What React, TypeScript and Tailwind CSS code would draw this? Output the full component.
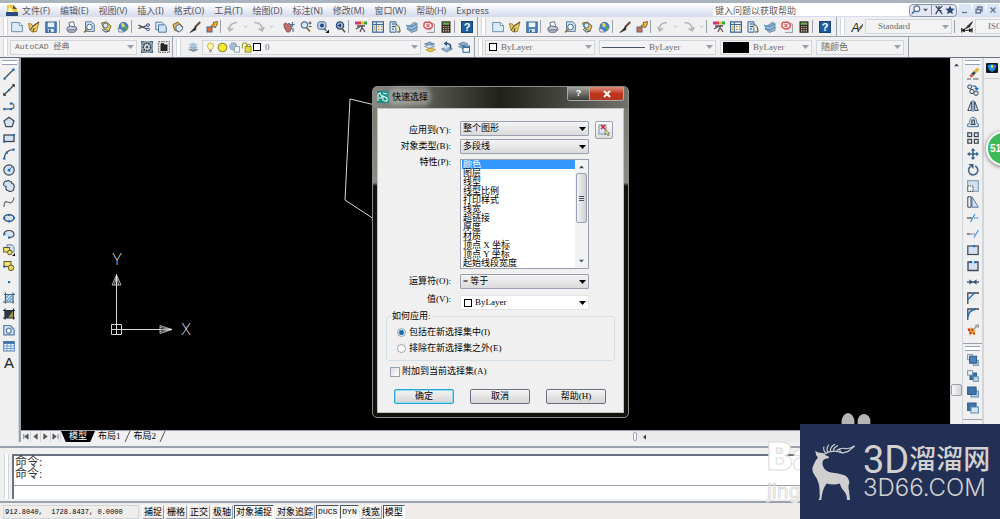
import { useState } from "react";
import type { ReactNode } from "react";

const SERIF = "font-['Liberation_Serif','Noto_Sans_CJK_SC',serif]";
const SANS = "font-['Noto_Sans','Noto_Sans_CJK_SC',sans-serif]";
const MONO = "font-['Liberation_Mono','Noto_Sans_CJK_SC',monospace]";

const INK = "#3f4650";
const BLUE = "#1a6fc0";
const PALE = "#d3e2f2";
const STEEL = "#4a79a8";

function Dot({ x, y, c = BLUE }: { x: number; y: number; c?: string }) {
  return <rect x={x - 1} y={y - 1} width={2.2} height={2.2} fill={c} />;
}

const icons: Record<string, ReactNode> = {
  new: (
    <>
      <path d="M.7 1.5h7.8l2.9 2.8v6.4H.7z" fill="#dcebf8" stroke="#6d8fb0" />
      <path d="M8.2 1.5v3h3.2" fill="#fff" stroke="#5f7f9f" strokeWidth=".8" />
    </>
  ),
  open: (
    <>
      <path d="M.5 2.5l3 .5 1 2L11 1 8.5 10.5 4 11 1.5 8z" fill="#e9c75c" stroke="#8f7428" strokeWidth=".8" />
      <path d="M2 9.5l3-4.5 6-4M5 11l1-4" stroke="#4b4430" fill="none" />
    </>
  ),
  save: (
    <>
      <rect x=".8" y="1" width="10.4" height="10.4" fill="#4f86bd" stroke="#30618f" />
      <rect x="2.8" y="1.5" width="6.4" height="4.5" fill="#e8f1fa" />
      <rect x="3.2" y="8" width="5.6" height="3.2" fill="#dce6ee" />
      <rect x="4" y="8.6" width="1.6" height="2.4" fill="#2d4f73" />
    </>
  ),
  print: (
    <>
      <path d="M3.5 5.5L3 1.5l4.500-.8 1 4.500" fill="#fff" stroke="#667084" />
      <path d="M1 7l3-2 6 1 1 2.5-2.500 2.700H3L1 9.500z" fill="#c8cee0" stroke="#596379" />
      <path d="M2 9l8-.2" stroke="#596379" />
    </>
  ),
  preview: (
    <>
      <path d="M2.5.8h6l2.800 2.600v7H2.500z" fill="#cfe1f2" stroke="#5c7c9c" />
      <circle cx="6.5" cy="6" r="2.8" fill="#f5faff" stroke="#4d6b8a" />
      <path d="M4.5 8L1 11.400" stroke="#9b7540" strokeWidth="1.7" />
    </>
  ),
  publish: (
    <>
      <path d="M1.5 2l5-1 4.500 4-2 5-5-2z" fill="#eecb54" stroke="#77652c" />
      <circle cx="5.5" cy="4.5" r="2.5" fill="#d8e9fa" stroke="#496f9b" />
      <path d="M2 8l3 3.200L9.500 10" fill="#b5c5d7" stroke="#4a5566" />
    </>
  ),
  globe: (
    <>
      <circle cx="6.5" cy="5.8" r="4.5" fill="#3d83cf" stroke="#35608f" strokeWidth=".7" />
      <path d="M4 2l3 .5 1 3-3 1z" fill="#f2d452" />
      <path d="M8 5l3 1-1.500 4L7 8z" fill="#59a35a" />
      <path d="M1 7l4 1.500L7 11H2z" fill="#dfe9f3" stroke="#567" strokeWidth=".7" />
    </>
  ),
  cut: (
    <>
      <path d="M.5 4.200L9 8M.5 7.500L9 4.500" stroke={INK} strokeWidth="1.3" />
      <ellipse cx="10" cy="4" rx="1.6" ry="1.2" fill="none" stroke="#3c4b87" />
      <ellipse cx="10" cy="8.3" rx="1.6" ry="1.2" fill="none" stroke="#3c4b87" />
    </>
  ),
  copy: (
    <>
      <path d="M.8 1.200h6l1.700 1.500v6H.8z" fill="#e6f0fa" stroke="#5179a4" />
      <path d="M3.5 3.800h5.800l2 1.700v5.700H3.500z" fill="#cfe2f4" stroke="#5179a4" />
    </>
  ),
  paste: (
    <>
      <path d="M1 3.500l5-2.500 5 5-4 5L2.500 9z" fill="#dfb354" stroke="#7b6335" />
      <path d="M4 5l3.500-1.500L11 7l-3.500 4L4 9z" fill="#d8e8f6" stroke="#5b7592" />
    </>
  ),
  brush: (
    <>
      <path d="M11.200 1L6 6.200" stroke="#6b4a39" strokeWidth="2" />
      <path d="M6.500 5.500L4.500 8 1 11.500 7 8.500z" fill="#222" stroke="#222" strokeWidth=".7" />
    </>
  ),
  block: (
    <>
      <path d="M11.500.5L7 1.500l1 2-3 1 .5 2 3-1 .5 1.500 2-3z" fill="#f1b93c" stroke="#6a4b12" strokeWidth=".8" />
      <rect x="1" y="6" width="5" height="5" fill="#e26a3b" stroke="#3f6ba0" />
    </>
  ),
  undo: <path d="M2.500 8.500Q2 2 10 1.500M.8 6l1.800 3.700L6 7.400" fill="none" stroke="#b3b3b3" strokeWidth="1.6" />,
  redo: <path d="M1.500 1.500Q9.500 2 9 8.500M5.500 7.400L9 9.800 11.200 6" fill="none" stroke="#b3b3b3" strokeWidth="1.6" />,
  pan: (
    <>
      <path d="M.8 3l2-1 2 1.500L6 2l2 2 .5 4-2 3H4L1.500 7z" fill="#b86f69" stroke="#834a48" strokeWidth=".8" />
      <path d="M9.500 1v5M7.500 3.500h4.200M10 7v4" stroke={STEEL} strokeWidth="1.2" />
    </>
  ),
  zoomrt: (
    <>
      <circle cx="4.5" cy="4" r="3.2" fill="#d7e8f7" stroke="#58799b" strokeWidth="1.2" />
      <path d="M6.500 6.500l3.500 4" stroke="#8c6d42" strokeWidth="1.8" />
      <path d="M8.500 2h3M10 .5v3M8.800 5.500h2.700" stroke="#334" strokeWidth=".9" />
    </>
  ),
  zoomwin: (
    <>
      <rect x=".8" y=".8" width="8" height="7.5" rx="2" fill="#bfd6ec" stroke="#4b6d92" />
      <circle cx="5" cy="4.5" r="2" fill="#1d4e80" />
      <path d="M7 7.500l2.500 2.500" stroke="#4b6d92" strokeWidth="1.6" />
      <path d="M12 8.500V12H8.500z" fill="#111" />
    </>
  ),
  zoomprev: (
    <>
      <circle cx="6" cy="4.5" r="3.6" fill="#9ebbd7" stroke="#294c70" strokeWidth="1.3" />
      <path d="M3.500 4.500L7 2.500v4z" fill="#1b3b60" />
      <path d="M8 7.500l3 3.700" stroke="#6b5640" strokeWidth="1.7" />
    </>
  ),
  props: (
    <>
      <path d="M0 .5h3v3H0z" fill="#c22fb7" />
      <path d="M3 .5h3v3H3z" fill="#e23b2f" />
      <path d="M6 .5h3v3H6z" fill="#eac829" />
      <path d="M9 .5h3v3H9z" fill="#37a546" />
      <path d="M2 5h8M1 8l5-3 4 6M5 11l3-7" stroke="#5c5260" strokeWidth="1.3" fill="none" />
    </>
  ),
  center: (
    <>
      <rect x=".6" y=".8" width="10.8" height="10.4" fill="#e9f1f8" stroke="#3f6591" strokeWidth="1.2" />
      <path d="M4.300 1v10M1 3.500h10" stroke="#3f6591" />
      <path d="M6 5.500h1.500M9 5.500h1.500M6 8.500h1.500M9 8.500h1.500M2 6h1M2 8.500h1" stroke="#c39b32" strokeWidth="1.5" />
    </>
  ),
  palette: (
    <>
      <path d="M1 .8h6v10.400H1z" fill="#d5e5f3" stroke="#3f6591" />
      <path d="M3 3h3M3 5.500h3M3 8h2" stroke="#31547b" strokeWidth="1.2" />
      <path d="M7 3.500q4 .5 4 7.500H8" fill="#f4e9bd" stroke="#3d4d60" />
    </>
  ),
  sheet: (
    <>
      <path d="M1 7l7-5.500 3 1v7L5 11.500z" fill="#a8b9c8" stroke="#74889b" />
      <path d="M0 4.500l6 1 5-3M1 8l5 1 5-3" stroke="#4d94c7" strokeWidth="1.3" fill="none" />
    </>
  ),
  markup: (
    <>
      <path d="M5 3h6.500v8.500H4" fill="#e6e9ed" stroke="#9ba2ab" />
      <path d="M1 2.500q1-2 3-1 2-1.200 3.500.3 2 .2 1.500 2.200 1 2-.7 2.800-.8 1.700-2.800.9-2 1-3-.7Q.3 6.300 1 4.500z" fill="#fbe4e4" stroke="#d8333b" strokeWidth="1.2" />
      <path d="M3.500 3l3 3.200M6.500 3l-3 3.200" stroke="#d8333b" />
    </>
  ),
  calc: (
    <>
      <rect x="1.5" y=".3" width="9" height="11.5" fill="#35281f" />
      <rect x="2.7" y="1.5" width="6.6" height="2.3" fill="#62ad5b" />
      <path d="M3 5.700h6.500M3 7.800h6.500M3 9.900h6.500" stroke="#dfcfc0" strokeWidth="1.1" strokeDasharray="1.3 1" />
    </>
  ),
  help: (
    <>
      <rect x=".5" y=".5" width="11" height="11" fill="#205c9c" stroke="#184572" />
      <text x="6" y="10" textAnchor="middle" fontSize="11" fontWeight="700" fill="#fff" fontFamily="Liberation Sans">?</text>
    </>
  ),
  gear: (
    <>
      <rect width="12" height="12" fill="#8b9caa" />
      <path d="M0 3V0h3M9 0h3v3M12 9v3H9M3 12H0V9" stroke="#38638f" strokeWidth="1.6" fill="none" />
      <circle cx="6" cy="6" r="3.6" fill="#d9e2ea" stroke="#27313b" strokeWidth="1.4" strokeDasharray="1.7 .8" />
      <circle cx="6" cy="6" r="1.5" fill="#4d5c6b" />
    </>
  ),
  space: (
    <>
      <rect x=".6" y=".6" width="10.8" height="10.8" fill="#e5e5e5" stroke="#606060" strokeDasharray="1.5 1" />
      <path d="M2.500 3.500l1-1.500h2l1 1.500h3V10h-7z" fill="#252525" />
    </>
  ),
  layers: (
    <>
      <path d="M1 8.500l5-2 5.500 2-5 2.500z" fill="#7390aa" />
      <path d="M1 6l5-2 5.500 2-5 2.500z" fill="#8fa9c1" stroke="#e8eef4" strokeWidth=".5" />
      <path d="M1 3.500l5-2 5.500 2-5 2.500z" fill="#a5bfd6" stroke="#e8eef4" strokeWidth=".5" />
    </>
  ),
  bulb: (
    <>
      <path d="M6 .8q3.700.3 3.300 4Q9 6.500 7.500 8h-3Q3 6.500 2.700 4.800 2.500 1 6 .8z" fill="#fbf3a0" stroke="#b8a440" strokeWidth=".8" />
      <path d="M4.500 9.300h3M4.800 10.800h2.400" stroke="#7d7d7d" />
    </>
  ),
  sun: <circle cx="6" cy="6" r="4.7" fill="#f6ea2b" stroke="#8b8b45" strokeWidth="1.2" />,
  freeze: (
    <>
      <circle cx="4.8" cy="4.8" r="4" fill="#a5bccf" stroke="#718da7" strokeDasharray="1.5 .7" />
      <rect x="6" y="5" width="5.5" height="6" fill="#f4f7fa" stroke="#8da1b5" />
    </>
  ),
  lock: (
    <>
      <path d="M1.500 7V3q.5-2 2.500-2t2.300 2v3" fill="none" stroke="#a3ac2c" strokeWidth="1.4" />
      <rect x="4.5" y="5" width="6.5" height="6" fill="#e6dc42" stroke="#8d8a29" />
      <path d="M6 5q0-3 2.500-2.500T10 5" fill="none" stroke="#8d8a29" />
    </>
  ),
  laymake: (
    <>
      <path d="M.5 3l5-2 5 2-5 2z" fill="#84a9ca" stroke="#496b8b" strokeWidth=".6" />
      <path d="M.5 5.500l5-2 5 2-5 2z" fill="#d9e4ee" stroke="#496b8b" strokeWidth=".6" />
      <path d="M2 9l4-2 5.500 1.500L7 11z" fill="#edc844" stroke="#8c762a" strokeWidth=".6" />
    </>
  ),
  layprev: (
    <>
      <path d="M.5 8l5-2 6 2-6 3z" fill="#8fb1cf" stroke="#496b8b" strokeWidth=".6" />
      <path d="M9.500 7.500Q10.500 2.500 5.500 2.500" stroke="#244f7d" strokeWidth="1.6" fill="none" />
      <path d="M6 .2L2.500 2.600 6 5z" fill="#244f7d" />
      <path d="M1 6l3-1.500 4 1.500-3 2z" fill="#cfdeeb" />
    </>
  ),
  laystate: (
    <>
      <path d="M.5 3l4.500-2 5 2-5 2zM.5 5.500l4-1.500 4 2-3 2z" fill="#8fb1cf" stroke="#496b8b" strokeWidth=".6" />
      <rect x="5" y="5" width="6.5" height="6.3" fill="#eff5fa" stroke="#2c659c" />
      <path d="M5 6.200h6.500" stroke="#2c659c" strokeWidth="1.5" />
    </>
  ),
  textstyle: (
    <>
      <text x="4.5" y="10.5" textAnchor="middle" fontSize="12" fontStyle="italic" fill="#222" fontFamily="Liberation Sans">A</text>
      <path d="M12 3L9 6 7 10 10.500 7z" fill="#a27345" stroke="#333" strokeWidth=".6" />
    </>
  ),
  dimstyle: (
    <>
      <path d="M.8 7v4.500M11 7v4.500" stroke="#222" strokeWidth="1.2" />
      <path d="M1 9.300h10M1 9.300l2.500-1.500v3zM11 9.300L8.500 7.800v3z" stroke="#222" fill="#222" />
      <path d="M11.500.8L7.500 4 4.500 7.500 8.500 6z" fill="#49372c" stroke="#222" strokeWidth=".8" />
    </>
  ),
  // draw toolbar
  line: (
    <>
      <path d="M1.500 10.500L10.500 1.500" stroke={INK} strokeWidth="1.2" />
      <Dot x={1.5} y={10.5} />
      <Dot x={10.5} y={1.5} />
    </>
  ),
  xline: (
    <>
      <path d="M1 11L11 1" stroke={INK} strokeWidth="1.2" />
      <path d="M.3 11.700V8.500l3 3.200zM11.700.3v3.200l-3-3.200z" fill="#222" />
      <Dot x={6} y={6} />
    </>
  ),
  pline: (
    <>
      <path d="M1 9h6.500q3.800-.5 3.500-3T8 3.200" fill="none" stroke="#65707b" strokeWidth="1.3" />
      <Dot x={1.2} y={9} />
      <Dot x={7.8} y={9} />
      <Dot x={7.8} y={3.5} />
    </>
  ),
  polygon: <path d="M6 1.200l5 3.700-1.900 5.800H2.900L1 4.900z" fill={PALE} stroke={INK} strokeWidth="1.2" />,
  rect: (
    <>
      <rect x="1" y="3" width="10" height="6.5" fill={PALE} stroke={INK} strokeWidth="1.3" />
      <Dot x={10.8} y={3} />
      <Dot x={1.2} y={9.5} />
    </>
  ),
  arc: (
    <>
      <path d="M1.200 11Q1.500 2 11 1.500" fill="none" stroke={INK} strokeWidth="1.2" />
      <Dot x={1.2} y={10.5} />
      <Dot x={3.8} y={4.5} />
      <Dot x={10.5} y={1.5} />
    </>
  ),
  circle: (
    <>
      <circle cx="6" cy="6" r="5.2" fill={PALE} stroke={INK} strokeWidth="1.2" />
      <path d="M6 6l3.200-3.500" stroke={BLUE} />
      <circle cx="6" cy="6.2" r="1.4" fill={BLUE} />
    </>
  ),
  cloud: (
    <path
      d="M3 6.500Q0 6 .8 3.500 1 .8 3.800 1.200 5 0 6.800 1.200q2 0 2 2.300 2.200 0 2 2 1 1.200 0 2.500.3 3.300-2.900 3.300-1.700.7-3-.8Q2.500 10 3 8z"
      fill={PALE}
      stroke={INK}
      strokeWidth="1.1"
    />
  ),
  spline: <path d="M1 11Q1 4.500 4.500 6T9 6q1.800-1.500 2-4.500" fill="none" stroke="#666e77" strokeWidth="1.3" />,
  ellipse: (
    <>
      <ellipse cx="6" cy="6" rx="5" ry="3.3" fill={PALE} stroke={INK} strokeWidth="1.3" />
      <Dot x={6} y={2.8} />
      <Dot x={6} y={9.2} />
      <Dot x={1} y={6} />
      <Dot x={11} y={6} />
    </>
  ),
  elarc: (
    <>
      <path d="M1 6q.5-3.500 5-3.500T11 6 6 9.500" fill={PALE} stroke={INK} strokeWidth="1.2" />
      <Dot x={1.2} y={6.2} />
      <Dot x={6} y={9.5} />
    </>
  ),
  insert: (
    <>
      <path d="M4 .8h5l2 2V8H4z" fill={PALE} stroke="#6084a6" />
      <rect x=".6" y="3.5" width="6" height="4.5" fill="#f0df71" stroke="#5f5b2d" />
      <circle cx="6.8" cy="8.5" r="2.3" fill="#e8d85b" stroke="#5f5b2d" />
      <path d="M12 9v3H9z" fill="#111" />
    </>
  ),
  make: (
    <>
      <rect x="1" y="1.5" width="7" height="5" fill="#f0df71" stroke="#5f5b2d" />
      <circle cx="8" cy="7.8" r="2.8" fill="#e8d85b" stroke="#5f5b2d" />
      <Dot x={1.2} y={6.5} />
    </>
  ),
  point: <Dot x={6} y={6} />,
  hatch: (
    <>
      <path d="M1 2.500h11M0 10h11M2.500.5v11M10 .5v11" stroke="#41617f" strokeWidth="1.2" />
      <path d="M3 6l3-3M3 9.500L9.500 3M6 9.500L9.500 6" stroke="#5b9dd8" strokeWidth="1.2" />
    </>
  ),
  gradient: (
    <>
      <rect x="2" y="2" width="8.5" height="8" fill="#303847" />
      <path d="M10 3v7H5z" fill="#ad9a45" />
      <path d="M0 2.500h12M0 10h12M2 .5v11M10.500 .5v11" stroke="#1f2a3a" strokeWidth="1.2" />
    </>
  ),
  region: (
    <>
      <path d="M.8 1.500h6.700l3.700 4v5.300H.8z" fill={PALE} stroke="#557fa8" strokeWidth="1.2" />
      <circle cx="5.8" cy="6.7" r="2.5" fill="#fff" stroke="#557fa8" strokeWidth="1.2" />
    </>
  ),
  table: (
    <>
      <rect x=".7" y="1.5" width="10.6" height="9.5" fill="#f4f9ff" stroke="#4c7cb4" />
      <path d="M.7 2.700h10.600" stroke="#3f70ad" strokeWidth="2.4" />
      <path d="M1 6h10M1 8.500h10M4 4v7M7.800 4v7" stroke="#6f9fd4" />
    </>
  ),
  // modify toolbar
  erase: (
    <>
      <path d="M11.500.5L7.500 4.500" stroke="#dcb43c" strokeWidth="3" />
      <path d="M7.700 4.200L5.500 6.500" stroke="#3b4652" strokeWidth="3" />
      <path d="M5.500 6.500L3.500 8.800" stroke="#d8553e" strokeWidth="3" />
      <path d="M0 11h4M6 11h5.500" stroke="#555" />
    </>
  ),
  dup: (
    <>
      <circle cx="2.7" cy="2.8" r="2" fill={PALE} stroke={INK} />
      <circle cx="5" cy="7.5" r="2.2" fill={PALE} stroke={INK} />
      <circle cx="9" cy="9.2" r="2.2" fill={PALE} stroke={INK} />
      <path d="M5.500 2q4-.5 4.200 3M7.800 3.800l2 2 1.700-2" fill="none" stroke={BLUE} strokeWidth="1.2" />
    </>
  ),
  mirror: (
    <>
      <path d="M4.300 1.500V10.500H.8z" fill="#eee" stroke={INK} />
      <path d="M7.700 1.500V10.500h3.500z" fill={PALE} stroke={INK} />
      <path d="M6 0v12" stroke={BLUE} />
    </>
  ),
  offset: (
    <>
      <path d="M.7 10.700V8q2-.3 2-1.500Q2.500 1.500 6 1.200q3.700.3 3.500 4Q9.500 8 11.400 8v2.700z" fill={PALE} stroke="#4e7ca8" />
      <path d="M3.500 8.300h5M5 7.500q-.7-3.500 1-3.700t1.500 3.700" fill="none" stroke={INK} strokeWidth="1.2" />
    </>
  ),
  array: (
    <g fill={PALE} stroke={INK} strokeWidth="1.2">
      <rect x=".8" y=".8" width="3.8" height="3.8" />
      <rect x="7.4" y=".8" width="3.8" height="3.8" />
      <rect x=".8" y="7.4" width="3.8" height="3.8" />
      <rect x="7.4" y="7.4" width="3.8" height="3.8" />
    </g>
  ),
  move: (
    <>
      <path d="M6 1v10M1 6h10" stroke="#34618f" strokeWidth="1.5" />
      <path d="M6 0l2.300 2.800H3.700zM6 12l2.300-2.800H3.700zM0 6l2.800-2.300v4.600zM12 6L9.200 3.700v4.600z" fill="#34618f" />
    </>
  ),
  rotate: (
    <>
      <path d="M3.500 2.500A4.600 4.600 0 1 0 8 2" fill="none" stroke="#44688e" strokeWidth="1.6" />
      <path d="M1.500 0h5v5z" fill="#345e8a" />
    </>
  ),
  scale: (
    <>
      <rect x=".7" y=".7" width="10.6" height="10.6" fill={PALE} stroke="#7a93ac" />
      <rect x=".7" y="6" width="5.3" height="5.3" fill="#f5f5f5" stroke={INK} strokeDasharray="1.3 .8" />
    </>
  ),
  stretch: (
    <>
      <path d="M5 .8l6.300 10.400H5z" fill={PALE} stroke="#5278a0" />
      <path d="M.8 .8H4v10.400H.8z" fill="#f4f4f4" stroke={INK} />
    </>
  ),
  trim: (
    <>
      <path d="M0 6h5" stroke={INK} strokeWidth="1.2" />
      <path d="M7 6h5" stroke={BLUE} strokeDasharray="1.5 .8" />
      <path d="M3.500 10L8 2" stroke="#4b93d8" strokeWidth="1.2" />
    </>
  ),
  extend: (
    <>
      <path d="M0 6h3.500" stroke={INK} strokeWidth="1.2" />
      <path d="M4 6h4" stroke={BLUE} strokeDasharray="1.5 .8" />
      <path d="M7 9.500L11.500 2" stroke="#4b93d8" strokeWidth="1.2" />
    </>
  ),
  breakpt: (
    <>
      <rect x=".8" y="2" width="10.4" height="8.5" fill={PALE} stroke={INK} strokeWidth="1.2" />
      <Dot x={7} y={2} />
    </>
  ),
  breakln: (
    <>
      <path d="M4 2H1v8.500h10V2H8" fill={PALE} stroke={INK} strokeWidth="1.3" />
      <Dot x={4} y={2} />
      <Dot x={8} y={2} />
    </>
  ),
  join: (
    <>
      <path d="M0 6h12" stroke={INK} strokeWidth="1.3" />
      <path d="M2.500 3.200L5.800 6 2.500 8.800zM9.500 3.200L6.200 6l3.300 2.800z" fill="#29537f" />
    </>
  ),
  chamfer: (
    <>
      <path d="M.8 12V1H12" fill="none" stroke={INK} strokeWidth="1.3" />
      <path d="M1 7.500L7.500 1" stroke={BLUE} strokeWidth="1.2" />
    </>
  ),
  fillet: (
    <>
      <path d="M.8 12V1H12" fill="none" stroke={INK} strokeWidth="1.3" />
      <path d="M1 9Q1.500 2 9 1.200" stroke={BLUE} strokeWidth="1.5" fill="none" />
    </>
  ),
  explode: (
    <>
      <path d="M0 4l2.500 1L4 3l2 2.500 3 .5-1.500 2L8.500 11l-3-1L2 12l.5-3z" fill="#e8b23a" />
      <path d="M1 4.500h2v2.500H1zM4.500 4.500h2V7h-2zM2.500 7.500h2V10h-2zM6 8.500h2v2H6z" fill="#c43c31" />
      <path d="M7 5l3-3M8 1.500l3.500-.5-.5 3" stroke="#8e949b" fill="none" strokeWidth="1.2" />
    </>
  ),
  front: (
    <>
      <rect x=".6" y=".6" width="5" height="5" fill="#e7eff7" stroke="#7895b3" />
      <rect x="6.4" y="6.4" width="5" height="5" fill="#bcd4ea" stroke="#7895b3" />
      <rect x="2.6" y="2.2" width="7" height="7" fill="#4d80b2" stroke="#2f5e8d" />
    </>
  ),
  back: (
    <>
      <rect x="3" y="3" width="6.5" height="6.5" fill="#3d6f9f" stroke="#2f5e8d" />
      <rect x=".6" y=".6" width="5" height="4.5" fill="#e7eff7" stroke="#7895b3" />
      <rect x="6.4" y="6.9" width="5" height="4.5" fill="#bcd4ea" stroke="#7895b3" />
    </>
  ),
  above: (
    <>
      <rect x="4" y="5" width="7.4" height="6" fill="#bcd4ea" stroke="#5c88b1" />
      <rect x=".6" y="1" width="8.5" height="7.5" fill="#3f74a8" stroke="#2f5e8d" />
    </>
  ),
  under: (
    <>
      <rect x=".6" y="1" width="8.5" height="7.5" fill="#3f74a8" stroke="#2f5e8d" />
      <rect x="4" y="5" width="7.4" height="6" fill="#d5e4f2" stroke="#5c88b1" />
    </>
  ),
};

function Icon({ name, className = "size-3" }: { name: string; className?: string }) {
  return (
    <svg viewBox="0 0 12 12" className={`${className} shrink-0`} fill="none">
      {icons[name]}
    </svg>
  );
}

function Tool({ name }: { name: string }) {
  return (
    <button aria-label={name} className="flex h-4 w-[17px] shrink-0 items-center justify-center">
      <Icon name={name} />
    </button>
  );
}

function Caret({ className = "text-gray-400" }: { className?: string }) {
  return (
    <svg viewBox="0 0 7 4" className={`h-1 w-[7px] shrink-0 ${className}`}>
      <path d="M0 0h7L3.5 4z" fill="currentColor" />
    </svg>
  );
}

const Sep = () => <div className="mr-[3px] h-[13px] w-px shrink-0 bg-gray-400" />;

const Grip = () => <div className="mx-[3px] h-[17px] w-[5px] shrink-0 border-x border-gray-300 bg-white" />;

function Band({ children, className = "" }: { children: ReactNode; className?: string }) {
  return <div className={`flex h-full shrink-0 items-center border-r border-gray-400 ${className}`}>{children}</div>;
}

type ComboProps = {
  label: string;
  value: string;
  className: string;
  selectClass?: string;
  caret?: string;
  children?: ReactNode;
};

function Combo({ label, value, className, selectClass = "pl-1", caret, children }: ComboProps) {
  return (
    <div className={`flex shrink-0 items-center border ${className}`}>
      {children}
      <select aria-label={label} className={`h-full min-w-0 flex-1 appearance-none bg-transparent outline-none ${selectClass}`}>
        <option>{value}</option>
      </select>
      <div className="pointer-events-none flex h-full w-3 items-center justify-center">
        <Caret className={caret} />
      </div>
    </div>
  );
}

function StandardTools() {
  return (
    <>
      {["new", "open", "save"].map((n) => <Tool key={n} name={n} />)}
      <Sep />
      {["print", "preview", "publish", "globe"].map((n) => <Tool key={n} name={n} />)}
      <Sep />
    </>
  );
}

function UndoRedo() {
  return (
    <>
      {["undo", "redo"].map((n) => (
        <div key={n} className="flex items-center">
          <Tool name={n} />
          <button aria-label={`${n} list`} className="flex w-[9px] justify-center">
            <Caret className="scale-75 text-gray-300" />
          </button>
        </div>
      ))}
    </>
  );
}

function Palettes() {
  return (
    <>
      {["props", "center", "palette", "sheet", "markup", "calc"].map((n) => <Tool key={n} name={n} />)}
      <Sep />
      <Tool name="help" />
    </>
  );
}

const menus = ["文件(F)", "编辑(E)", "视图(V)", "插入(I)", "格式(O)", "工具(T)", "绘图(D)", "标注(N)", "修改(M)", "窗口(W)", "帮助(H)", "Express"];

function MenuBar() {
  return (
    <div className={`flex h-[17px] shrink-0 items-center border-t-[3px] border-[#a9b4bf] bg-linear-to-b from-white to-[#d5dbed] text-[9px] leading-[13px] text-[#55585f] ${SANS}`}>
      <svg viewBox="0 0 12 12" className="mr-1 ml-[6px] size-3">
        <path d="M1 1h6l4 4v6H1z" fill="#f0c63e" />
        <path d="M0 8h12v4H0z" fill="#2c4b80" />
        <path d="M3 2l5 6H2z" fill="#fff3b0" />
        <path d="M7 1l4 4H7z" fill="#456" />
      </svg>
      <nav className="flex flex-1 gap-[10px]">
        {menus.map((m) => <button key={m} className="whitespace-nowrap">{m}</button>)}
      </nav>
      <input
        aria-label="帮助搜索"
        className="h-3 w-[196px] bg-white px-0.5 text-[9px] placeholder:text-[#5a5a5a]"
        placeholder="键入问题以获取帮助"
      />
      <div className="flex h-[13px] w-[48px] items-center justify-around rounded-sm border border-[#8995ae] bg-[#e3e8f4] text-[#2f4f7d]">
        <button aria-label="搜索">
          <svg viewBox="0 0 12 12" className="size-[10px]">
            <circle cx="7" cy="4.5" r="3.5" fill="#fff" stroke="#4d6d99" strokeWidth="1.4" />
            <path d="M4.500 7L1 10.500" stroke="#4d6d99" strokeWidth="2" />
          </svg>
        </button>
        <Caret className="scale-75 text-gray-600" />
        <button aria-label="通讯中心" className="border-l border-[#8995ae] pl-0.5">
          <svg viewBox="0 0 12 12" className="size-[10px]">
            <path d="M2 1l8 10M10 1L5 6M6 1v3M2 11l3-5 4 1" stroke="#2b3f60" strokeWidth="1.4" fill="none" />
          </svg>
        </button>
        <button aria-label="收藏夹">
          <svg viewBox="0 0 12 12" className="size-[10px]">
            <path d="M6 .5l1.600 3.700 4 .3-3 2.700.9 4L6 9l-3.500 2.200.9-4-3-2.700 4-.3z" fill="#2c4775" />
          </svg>
        </button>
      </div>
      <div className="mr-px ml-[2px] flex gap-0.5">
        {["M3 8.500h5", "M4.500 5V3H9v4H7.500M3 5.500h4.500V9H3z", "M3.500 3.500l5 5M8.500 3.500l-5 5"].map((d) => (
          <button key={d} aria-label="window" className="h-3 w-3 bg-[#d9e5f4]">
            <svg viewBox="0 0 12 12" className="size-3">
              <path d={d} stroke="#65738a" strokeWidth="1.3" fill="none" />
            </svg>
          </button>
        ))}
      </div>
    </div>
  );
}

const combo = "h-[15px] border-gray-300 bg-[#f3f3f3] text-[#6a6a6a]";

function Toolbars() {
  return (
    <div className="shrink-0 overflow-hidden border-b border-gray-500 bg-[#f0f0f0] text-[9px]">
      <div className="flex h-5 w-full items-center overflow-hidden border-b border-gray-400">
        <Band className="w-[478px]">
          <div className="-mr-1 flex"><Grip /></div>
          <div className="w-px" />
          <StandardTools />
          {["cut", "copy", "paste", "brush", "block"].map((n) => <Tool key={n} name={n} />)}
          <Sep />
          <UndoRedo />
          <div className="w-1" />
          {["pan", "zoomrt", "zoomwin", "zoomprev"].map((n) => <Tool key={n} name={n} />)}
          <Sep />
          <Palettes />
        </Band>
        <Band className="w-[359px]">
          <Grip />
          <StandardTools />
          <Tool name="brush" />
          <Tool name="block" />
          <Sep />
          <UndoRedo />
          <Sep />
          <Palettes />
        </Band>
        <Band>
          <Grip />
          <Tool name="textstyle" />
          <Combo label="文字样式" value="Standard" className={`w-[87px] ${combo}`} selectClass="pl-3" />
          <div className="w-0.5" />
          <Sep />
          <Tool name="dimstyle" />
          <Combo label="标注样式" value="ISO-25" className={`w-[87px] ${combo}`} selectClass="pl-3" />
        </Band>
      </div>
      <div className="flex h-5 w-full items-center">
        <Band className="w-[173px]">
          <div className="-mr-px flex"><Grip /></div>
          <Combo label="工作空间" value="AutoCAD 经典" className={`mr-px w-[127px] ${combo} ${MONO}`} selectClass="pl-1 text-[8px]" />
          <Tool name="gear" />
          <Tool name="space" />
        </Band>
        <Band className="w-[302px]">
          <Grip />
          <Tool name="layers" />
          <Combo label="图层" value="0" className={`ml-px w-[219px] ${combo}`} selectClass="pl-1">
            <span className="flex items-center pl-0.5">
              {["bulb", "sun", "freeze", "lock"].map((n) => <Icon key={n} name={n} className="mr-px size-[11px]" />)}
              <span className="size-2 border border-black bg-white" />
            </span>
          </Combo>
          <Tool name="laymake" />
          <Tool name="layprev" />
          <Tool name="laystate" />
        </Band>
        <Band className="gap-1 pr-1">
          <div className="-mr-[5px] flex"><Grip /></div>
          <Combo label="颜色" value="ByLayer" className={`w-[110px] ${combo}`}>
            <span className="ml-[3px] size-2 border border-black bg-white" />
          </Combo>
          <Combo label="线型" value="ByLayer" className={`w-[117px] ${combo}`}>
            <span className="ml-0.5 h-px w-[43px] bg-gray-600" />
          </Combo>
          <Combo label="线宽" value="ByLayer" className={`w-[92px] ${combo}`}>
            <span className="ml-0.5 h-[11px] w-[26px] bg-black" />
          </Combo>
          <Combo label="打印样式" value="随颜色" className={`w-[88px] ${combo}`} />
        </Band>
      </div>
    </div>
  );
}

const drawTools = ["line", "xline", "pline", "polygon", "rect", "arc", "circle", "cloud", "spline", "ellipse", "elarc", "insert", "make", "point", "hatch", "gradient", "region", "table"];
const modifyTools = ["erase", "dup", "mirror", "offset", "array", "move", "rotate", "scale", "stretch", "trim", "extend", "breakpt", "breakln", "join", "chamfer", "fillet", "explode"];

const HGrip = () => <div className="mt-0.5 mb-px h-[5px] w-[15px] shrink-0 border-y border-gray-400 bg-white" />;

function Drawing() {
  return (
    <svg className="block h-full w-full" fill="none" stroke="#d8d8d8">
      <path d="M400 58L329 41 324 142 400 192" />
      <path d="M90.500 266.500h10v10h-10zM95.500 276.500V216M90.500 271.500H140" />
      <path d="M95.500 217L91 227h9zM95.500 217v10M95.500 217l-2 10M95.500 217l2 10M151 271.500l-12-4v8zM151 271.500h-12M151 271.500l-12-2M151 271.500l-12 2" strokeWidth=".8" />
      <g stroke="none" fill="#f0f0f0" fontFamily="Roboto, sans-serif" fontWeight="200" fontSize="16" textAnchor="middle">
        <text x="96" y="207">Y</text>
        <text x="165" y="277">X</text>
      </g>
    </svg>
  );
}

const properties = ["颜色", "图层", "线型", "线型比例", "打印样式", "线宽", "超链接", "厚度", "材质", "顶点 X 坐标", "顶点 Y 坐标", "起始线段宽度"];

const field = "h-[15px] rounded-[1px] border-gray-400 bg-linear-to-b from-[#f4f4f4] to-[#dadada]";

function PropertyList() {
  const [current, setCurrent] = useState("颜色");
  return (
    <div className="flex h-[110px] border border-gray-400 bg-white">
      <ul role="listbox" aria-labelledby="props-label" className="flex-1 overflow-hidden pl-px">
        {properties.map((p) => (
          <li
            key={p}
            role="option"
            aria-selected={p === current}
            onClick={() => setCurrent(p)}
            className={p === current ? "bg-[#3399ff] pl-px leading-[9px] text-white" : "pl-px leading-[9px]"}
          >
            {p}
          </li>
        ))}
      </ul>
      <div className="flex w-[13px] flex-col items-center justify-between bg-[#f2f2f2] py-0.5">
        <div className="flex flex-col items-center gap-1">
          <Caret className="mt-[3px] scale-75 rotate-180 text-gray-700" />
          <div className="flex h-[50px] w-[11px] flex-col items-center justify-center gap-px rounded-xs border border-gray-400 bg-linear-to-r from-[#f3f3f3] to-[#cfcfcf]">
            <span className="h-px w-[5px] bg-gray-600" />
            <span className="h-px w-[5px] bg-gray-600" />
            <span className="h-px w-[5px] bg-gray-600" />
          </div>
        </div>
        <Caret className="mb-[3px] scale-75 text-gray-600" />
      </div>
    </div>
  );
}

function QuickSelect() {
  const [mode, setMode] = useState("in");
  const radio =
    "size-[9px] appearance-none rounded-full border border-gray-400 bg-white checked:bg-[radial-gradient(#1d6fa8_0_2px,#dbe9f2_3px)]";
  return (
    <div
      role="dialog"
      aria-labelledby="qs-title"
      className="absolute top-[28px] left-[351px] w-[257px] rounded-[5px] border border-[#8a8d86] bg-linear-to-b from-[#77776f] from-0% via-[#8c8c88] via-29% to-[#10120d] to-30% p-[4px] pt-0 text-[9px] leading-[11px] text-black"
    >
      <div className="-mx-[4px] flex h-[21px] items-start rounded-t-[4px] bg-linear-to-r from-[#8b8b86] via-[#20211a] via-50% to-[#73736e] px-[4px]">
        <svg viewBox="0 0 12 12" className="mt-1 size-3">
          <rect width="12" height="12" fill="#1d8a83" />
          <path d="M1 10V3l2-1 2 4M2 7h3M6 10V5l4 2v3H7M6 2l4 1" stroke="#e9fffb" fill="none" strokeWidth="1.1" />
        </svg>
        <h2 id="qs-title" className={`mt-1 ml-[3px] flex-1 text-[9px] text-black ${SANS}`}>
          <span className="rounded-sm bg-white/30 shadow-[0_0_4px_3px_rgba(255,255,255,0.3)]">快速选择</span>
        </h2>
        <div className="flex h-[14px] overflow-hidden rounded-b-[3px] border border-t-0 border-[#a9a9a5] font-['Liberation_Sans',sans-serif] text-[9px] font-bold text-white">
          <button aria-label="帮助" className="w-[21px] bg-linear-to-b from-[#a5a5a2] to-[#3c3c38]">?</button>
          <button aria-label="关闭" className="flex w-[34px] items-center justify-center border-l border-[#a9a9a5] bg-linear-to-b from-[#dc8d7c] via-[#c0341d] to-[#b5351f]">
            <svg viewBox="0 0 8 8" className="size-2"><path d="M1 1l6 6M7 1L1 7" stroke="#fff" strokeWidth="2" /></svg>
          </button>
        </div>
      </div>
      <div className="border border-[#c2c4bd] bg-[#f0f0f0] px-2 pt-[12px] pb-2">
        <div className="grid grid-cols-[65px_129px_18px] gap-x-[9px] gap-y-[3px]">
          <span className="pt-1 text-right">应用到(Y):</span>
          <Combo label="应用到" value="整个图形" className={field} selectClass="pl-0.5" caret="text-black" />
          <button aria-label="选择对象" className="-mb-[4px] -ml-[3px] flex size-[18px] items-center justify-center rounded-xs border border-gray-400 bg-linear-to-b from-white to-[#ddd]">
            <svg viewBox="0 0 12 12" className="size-3">
              <rect x="1" y="1" width="7" height="9" fill="#dce8f4" stroke="#7792b0" />
              <path d="M3 1l4 4M7 1L3 5" stroke="#d22" strokeWidth="1.5" />
              <path d="M7 5v6l1.500-1.500L10 12l1-.7-1-2h1.500z" fill="#e8e46a" stroke="#555" strokeWidth=".6" />
            </svg>
          </button>
          <span className="pt-0.5 text-right">对象类型(B):</span>
          <Combo label="对象类型" value="多段线" className={field} selectClass="pl-0.5" caret="text-black" />
          <span />
          <span id="props-label" className="text-right">特性(P):</span>
          <div className="mt-0.5"><PropertyList /></div>
          <span />
          <span className="pt-1 text-right">运算符(O):</span>
          <Combo label="运算符" value="= 等于" className={`mt-0.5 ${field}`} selectClass="pl-0.5" caret="text-black" />
          <span />
          <span className="pt-0.5 text-right">值(V):</span>
          <Combo label="值" value="ByLayer" className="mt-[3px] h-[15px] border-[#e4e4e4] bg-white" selectClass="pl-[3px]" caret="text-black">
            <span className="ml-[3px] size-2 border border-black bg-white" />
          </Combo>
        </div>
        <fieldset className="mt-px rounded-[3px] border border-[#d3dfe6] px-[10px] pb-[4px]">
          <legend className="-ml-[6px] px-px leading-[10px]">如何应用:</legend>
          <label className="mt-[3px] flex h-4 items-center gap-[3px]">
            <input type="radio" name="mode" className={radio} checked={mode === "in"} onChange={() => setMode("in")} />
            包括在新选择集中(I)
          </label>
          <label className="flex h-4 items-center gap-[3px]">
            <input type="radio" name="mode" className={radio} checked={mode === "out"} onChange={() => setMode("out")} />
            排除在新选择集之外(E)
          </label>
        </fieldset>
        <label className="mt-[5px] ml-[4px] flex items-center gap-0.5">
          <input type="checkbox" className="size-[10px] appearance-none border border-gray-400 bg-linear-to-br from-[#ddd] to-white" />
          附加到当前选择集(A)
        </label>
        <div className="mt-[12px] flex justify-between pr-[9px] pl-2">
          {["确定", "取消", "帮助(H)"].map((b, i) => (
            <button
              key={b}
              className={`h-[15px] w-[60px] rounded-xs border bg-linear-to-b from-[#f5f5f5] to-[#d4d4d4] ${
                i === 0 ? "border-[#2ba4d8] ring-1 ring-[#8fdaf5] ring-inset" : "border-gray-500"
              }`}
            >
              {b}
            </button>
          ))}
        </div>
      </div>
    </div>
  );
}

function SheetTabs() {
  return (
    <div className="flex h-3 shrink-0 items-stretch border-t border-gray-400 bg-[#f0f0f0] text-[9px] leading-[11px]">
      {["M2 1v6M7 1L3 4l4 3z", "M6 1L2 4l4 3z", "M2 1l4 3-4 3z", "M1 1l4 3-4 3zM7 1v6"].map((d) => (
        <button key={d} aria-label="切换布局" className="flex w-[10px] items-center justify-center border-r border-gray-300">
          <svg viewBox="0 0 8 8" className="size-[7px]"><path d={d} fill="#555" stroke="#555" strokeWidth=".8" /></svg>
        </button>
      ))}
      <button className="w-[34px] bg-black text-white [clip-path:polygon(0_0,100%_0,86%_100%,14%_100%)]">模型</button>
      {["布局1", "布局2"].map((t) => (
        <div key={t} className="flex">
          <button className="px-[3px]">{t}</button>
          <svg viewBox="0 0 7 11" className="h-[11px] w-[7px]"><path d="M1 11L6 0" stroke="#555" /></svg>
        </div>
      ))}
      <div className="ml-auto flex w-[317px] items-center gap-1 bg-[#eaeaea]">
        <span className="h-[9px] w-1 rounded-xs border border-gray-400 bg-white" />
        <Caret className="scale-75 rotate-90 text-gray-700" />
      </div>
    </div>
  );
}

function Workspace() {
  return (
    <div className="flex min-h-0 flex-1 bg-[#f0f0f0]">
      <aside className="flex w-[19px] shrink-0 flex-col items-center overflow-hidden border-r border-gray-300">
        <HGrip />
        {drawTools.map((n) => <Tool key={n} name={n} />)}
        <button aria-label="多行文字" className="font-['Liberation_Sans',sans-serif] text-[15px] leading-[18px] text-[#222]">A</button>
      </aside>
      <main className="relative flex min-w-0 flex-1 flex-col border-l-2 border-gray-400">
        <div className="min-h-0 flex-1 overflow-hidden bg-black"><Drawing /></div>
        <QuickSelect />
        <SheetTabs />
      </main>
      <div className="flex w-[13px] shrink-0 flex-col items-center justify-between border-x border-gray-300 pt-[5px] pb-[46px]">
        <Caret className="scale-75 rotate-180 text-gray-700" />
        <div className="h-3 w-[11px] rounded-xs border border-gray-400 bg-linear-to-r from-[#f8f8f8] to-[#d4d4d4]" />
      </div>
      <aside className="flex w-[21px] shrink-0 flex-col items-center overflow-hidden border-r-2 border-gray-300">
        <HGrip />
        {modifyTools.map((n) => <Tool key={n} name={n} />)}
        <div className="mt-[5px] w-full border-t border-gray-400" />
        <HGrip />
        {["front", "back", "above", "under"].map((n) => <Tool key={n} name={n} />)}
        <div className="mt-[3px] w-full border-t border-gray-400" />
      </aside>
      <aside className="w-4 shrink-0">
        <div className="flex h-[21px] items-center justify-center border-b border-gray-300">
          <svg viewBox="0 0 12 12" className="size-3">
            <rect y="1" width="12" height="10" rx="1" fill="#101820" />
            <path d="M1.500 3.500q4.500-2.500 9 0L9 7.500l-3 2.500-3-2.500z" fill="#1c8ee8" />
            <path d="M5 3h2v3H5z" fill="#f0c63e" />
          </svg>
        </div>
      </aside>
    </div>
  );
}

function CommandLine() {
  return (
    <div className="shrink-0 border-b-2 border-gray-400 bg-[#f0f0f0] pt-[4px]">
      <div className="h-0.5 bg-gray-400" />
      <div className="mt-[6px] flex pb-0.5">
        <div className="mr-[3px] ml-1 w-[5px] shrink-0 border-x border-gray-300 bg-white" />
        <div className="flex-1 border-t-2 border-l-2 border-gray-500 bg-white">
          <div className="px-px pb-[5px] text-[12px] leading-3 text-[#333]">
            <p>命令:</p>
            <p>命令:</p>
          </div>
          <input aria-label="命令" className="block h-[14px] w-full border-t border-gray-400 px-1 text-[12px] outline-none" />
        </div>
      </div>
    </div>
  );
}

const toggles = [
  { name: "捕捉", on: false },
  { name: "栅格", on: false },
  { name: "正交", on: false },
  { name: "极轴", on: false },
  { name: "对象捕捉", on: true },
  { name: "对象追踪", on: false },
  { name: "DUCS", on: true },
  { name: "DYN", on: true },
  { name: "线宽", on: false },
  { name: "模型", on: true },
];

function StatusBar() {
  return (
    <div className="flex h-[16px] shrink-0 items-center gap-px bg-[#f0ecea] pt-px pl-[3px] text-[9px] leading-[13px] text-black">
      <div className="mr-0.5 w-[136px] border border-gray-300 pl-px font-['Liberation_Mono',monospace] text-[7px] leading-[12px] whitespace-pre">
        {"912.8040,  1728.8437, 0.0000"}
      </div>
      {toggles.map((t) => (
        <button
          key={t.name}
          aria-pressed={t.on}
          className={`border px-px leading-[12px] ${
            t.on ? "border-t-gray-600 border-r-white border-b-white border-l-gray-600 bg-[#f7f5f4]" : "border-t-white border-r-gray-400 border-b-gray-400 border-l-white"
          } ${/[A-Z]/.test(t.name) ? "font-['Liberation_Mono',monospace] text-[8px]" : ""}`}
        >
          {t.name}
        </button>
      ))}
    </div>
  );
}

function Deer() {
  return (
    <svg viewBox="0 0 130 175" className="h-[58px] w-[43px] shrink-0" fill="none">
      <path
        fill="#cfcfcf"
        d="M10 23Q16 29 24 29L34 30Q38 38 50 41 54 43 49 46 40 47 36 50 28 58 34 72 40 86 58 89 80 91 98 97 112 103 113 120 108 130 112 145L115 172H106Q106 155 97 146 88 138 84 122 66 128 44 122 34 135 31 152L28 172H19L23 167Q24 140 21 125 17 108 7 96-3 82 4 68 8 55 18 44 10 36 10 23z"
      />
      <path
        stroke="#cfcfcf"
        strokeWidth="3.5"
        strokeLinecap="round"
        d="M37 34Q55 22 75 25 100 36 116 20L129 9M41 30Q33 20 36 12M47 27Q43 15 50 6M56 25Q54 12 68 4M66 23Q64 14 77 8M76 22Q88 13 102 17 114 18 127 10M90 30Q84 26 84 20"
      />
    </svg>
  );
}

function Overlays() {
  return (
    <>
      <div className="absolute top-[131px] -right-[21px] flex size-[35px] items-center rounded-full border-2 border-white bg-[#3fba58] pl-0.5 font-['Liberation_Sans',sans-serif] text-[10px] font-bold text-white shadow-[0_1px_4px_rgba(0,0,0,0.5)]">
        51
      </div>
      <svg viewBox="0 0 32 20" className="absolute right-[128px] bottom-[87px] h-5 w-8">
        <ellipse cx="8" cy="10" rx="6.5" ry="9" fill="#b5b5b5" />
        <ellipse cx="24" cy="10" rx="6.5" ry="8" fill="#b5b5b5" />
      </svg>
      <div className="absolute right-[173px] bottom-[16px] w-[60px] font-['Inter',sans-serif] text-white [-webkit-text-stroke:1px_#dcdcdc]">
        <p className="text-[38px] leading-[46px] font-black">Ba</p>
        <p className="text-[20px] leading-6">jing</p>
      </div>
      <div className="absolute right-0 bottom-0 flex h-[95px] w-[200px] items-center gap-2 bg-[#223055] pl-3 text-[#d3d1cf]">
        <Deer />
        <div className="whitespace-nowrap">
          <p className="flex items-center font-['Roboto','Noto_Sans_CJK_SC',sans-serif] leading-8">
            <span className="text-[38px]">3D</span>
            <span className="text-[27px] font-medium">溜溜网</span>
          </p>
          <p className="font-['Inter',sans-serif] text-[24px] leading-6 font-light">3D66.COM</p>
        </div>
      </div>
    </>
  );
}

export default function App() {
  return (
    <div className={`relative flex h-screen flex-col overflow-hidden bg-[#f0f0f0] ${SERIF}`}>
      <MenuBar />
      <Toolbars />
      <Workspace />
      <CommandLine />
      <StatusBar />
      <Overlays />
    </div>
  );
}
